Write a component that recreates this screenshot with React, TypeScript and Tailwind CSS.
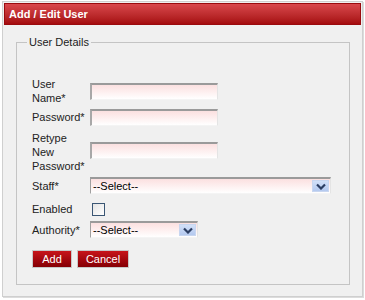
import React from "react";

const font = { fontFamily: '"Liberation Sans", Arial, sans-serif' };

function TextBox() {
  return (
    <div className="w-[128px] h-[17px] border-t-2 border-l-2 border-t-[#9a9a9a] border-l-[#a8a8a8] border-r border-b border-r-[#e4e4e4] border-b-[#f4f4f4] bg-gradient-to-b from-[#fbe0e0] to-white" />
  );
}

function Chevron() {
  return (
    <svg width="10" height="7" viewBox="0 0 10 7">
      <path d="M1 1.5 L5 5.5 L9 1.5" fill="none" stroke="#2c3e63" strokeWidth="2.2" />
    </svg>
  );
}

function SelectBox({ width }: { width: string }) {
  return (
    <div
      className={`${width} h-[17px] flex items-stretch border-t-2 border-l border-t-[#9a9a9a] border-l-[#a0a0a0] border-r border-b border-r-[#e4e4e4] border-b-[#f4f4f4] bg-gradient-to-b from-[#fbe0e0] to-white`}
    >
      <span className="flex-1 pl-[2px] text-[11px] leading-[14px] text-black">--Select--</span>
      <span className="w-[17px] my-[1px] mr-[1px] flex items-center justify-center bg-gradient-to-b from-[#d2e0f8] to-[#b4c9ef] border border-[#c8d6f0]">
        <Chevron />
      </span>
    </div>
  );
}

function Label({ children }: { children: React.ReactNode }) {
  return <div className="w-[58px] text-[11px] leading-[14px] text-[#222]">{children}</div>;
}

export default function App() {
  return (
    <div className="w-[365px] h-[300px] bg-white pt-[1px] pl-[2px]" style={font}>
      <div className="w-[361px] h-[296px] bg-[#f0f0f0] border border-[#cfcfcf] p-[1px] shadow-[1px_1px_0_#dcdcdc]">
        <div className="h-[22px] flex items-center pl-[4px] border border-[#9a0a0e] bg-gradient-to-b from-[#d9474c] to-[#a50a0e]">
          <span className="text-white font-bold text-[11px]">Add / Edit User</span>
        </div>

        <fieldset className="ml-[12px] mt-[10px] w-[334px] h-[250px] border border-[#c4c4c4]">
          <legend className="ml-[10px] px-[2px] text-[11px] leading-[14px] text-[#222]">User Details</legend>

          <div className="pl-[15px] flex flex-col">
            <div className="mt-[28px] h-[28px] flex items-center">
              <Label>User Name*</Label>
              <TextBox />
            </div>
            <div className="mt-[3px] h-[18px] flex items-center">
              <Label>Password*</Label>
              <TextBox />
            </div>
            <div className="mt-[5px] h-[42px] flex items-center">
              <Label>Retype New Password*</Label>
              <div className="-mt-[3px]">
                <TextBox />
              </div>
            </div>
            <div className="mt-[4px] h-[17px] flex items-center">
              <Label>Staff*</Label>
              <SelectBox width="w-[241px]" />
            </div>
            <div className="mt-[7px] h-[16px] flex items-center">
              <Label>Enabled</Label>
              <div className="ml-[2px] w-[13px] h-[13px] border border-[#3a5674] bg-gradient-to-br from-[#e4e4e4] to-white" />
            </div>
            <div className="mt-[4px] h-[17px] flex items-center">
              <Label>Authority*</Label>
              <SelectBox width="w-[108px]" />
            </div>
            <div className="mt-[12px] flex gap-[5px]">
              <button className="w-[40px] h-[18px] border border-[#c8c8c8] bg-gradient-to-b from-[#c8141a] to-[#850005] text-white text-[11px] leading-[14px]">
                Add
              </button>
              <button className="w-[52px] h-[18px] border border-[#c8c8c8] bg-gradient-to-b from-[#c8141a] to-[#850005] text-white text-[11px] leading-[14px]">
                Cancel
              </button>
            </div>
          </div>
        </fieldset>
      </div>
    </div>
  );
}
